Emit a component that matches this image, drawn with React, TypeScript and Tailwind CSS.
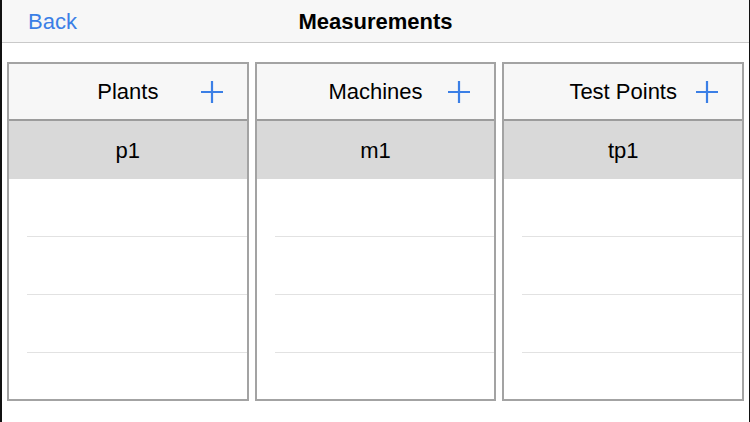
import React from 'react';

type Column = {
    title: string;
    items: string[];
};

const columns: Column[] = [
    { title: 'Plants', items: ['p1'] },
    { title: 'Machines', items: ['m1'] },
    { title: 'Test Points', items: ['tp1'] },
];

const PlusIcon = () => (
    <svg width="24" height="24" viewBox="0 0 24 24" fill="none">
        <path d="M12 1v22M1 12h22" stroke="#3b7fe6" strokeWidth="2.2" />
    </svg>
);

const ListColumn = ({ column }: { column: Column }) => {
    // always show a few empty rows like a table view
    const rows = [...column.items, '', '', '', ''];

    return (
        <div className="flex-1 min-w-0 flex flex-col border-2 border-[#a3a3a3] bg-white overflow-hidden">
            {/* Header */}
            <div className="relative h-[57px] shrink-0 flex items-center justify-center bg-[#f7f7f7] border-b-2 border-[#9c9c9c]">
                <span className="text-[22px] text-black">{column.title}</span>
                <button className="absolute right-[23px] top-1/2 -translate-y-1/2 flex items-center">
                    <PlusIcon />
                </button>
            </div>

            {/* Rows */}
            <div className="flex-1 flex flex-col">
                {rows.map((item, index) => (
                    <div
                        key={index}
                        className={`h-[58px] shrink-0 flex items-center justify-center text-[22px] text-black ${
                            index === 0 ? 'bg-[#d9d9d9]' : 'bg-white'
                        } ${index > 0 && index < rows.length - 1 ? 'ml-[18px] border-b border-[#e2e2e2]' : ''}`}
                    >
                        {item}
                    </div>
                ))}
            </div>
        </div>
    );
};

const App = () => {
    return (
        <div
            className="w-[750px] h-[422px] bg-white flex flex-col border-l-2 border-r border-[#111] overflow-hidden"
            style={{ fontFamily: '"Liberation Sans", Arial, sans-serif' }}
        >
            {/* Nav bar */}
            <header className="relative h-[43px] shrink-0 flex items-center justify-center bg-[#f7f7f7] border-b border-[#c9c9c9]">
                <button className="absolute left-[26px] text-[22px] text-[#3b7fe6]">Back</button>
                <h1 className="text-[22px] font-bold text-black">Measurements</h1>
            </header>

            {/* Columns */}
            <div className="flex-1 min-h-0 flex gap-[6px] pl-[5px] pr-[5px] pt-[19px] pb-[21px]">
                {columns.map((column) => (
                    <ListColumn key={column.title} column={column} />
                ))}
            </div>
        </div>
    );
};

export default App;
